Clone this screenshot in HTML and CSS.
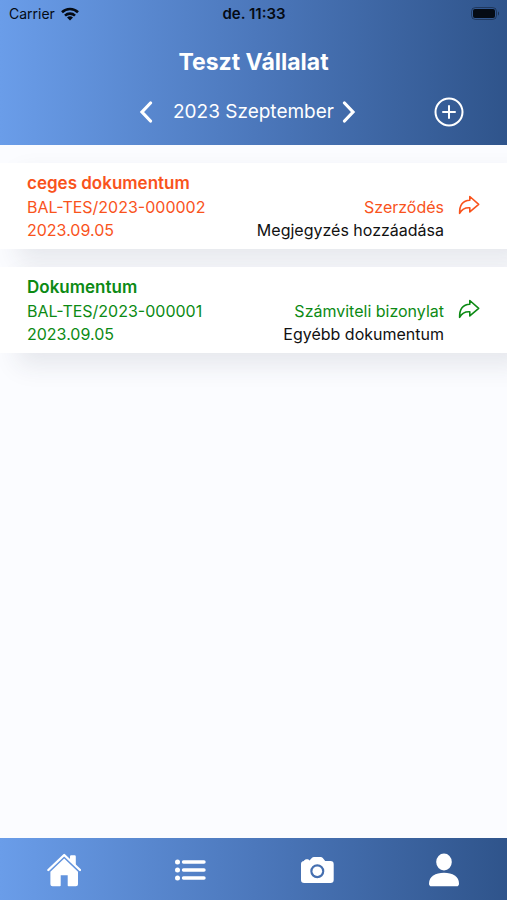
FILE: index.html
```html
<!DOCTYPE html>
<html lang="hu">
<head>
<meta charset="utf-8">
<meta name="viewport" content="width=device-width, initial-scale=1">
<title>Teszt Vállalat</title>
<link rel="stylesheet" href="styles.css">
</head>
<body>
<header class="header">
  <div class="status">
    <div class="carrier">
      <span>Carrier</span>
      <svg class="wifi" viewBox="0 0 18 14" width="18" height="14" aria-hidden="true">
        <g fill="none" stroke="currentColor" stroke-width="2.6"><path d="M1 5.2a11.5 11.5 0 0 1 16 0"/><path d="M4 8.6a7.2 7.2 0 0 1 10 0"/></g>
        <path fill="currentColor" d="M9 13.6 6 10.6a4.3 4.3 0 0 1 6 0z"/>
      </svg>
    </div>
    <time class="clock">de. 11:33</time>
    <svg class="battery" viewBox="0 0 28 14" width="28" height="14" aria-hidden="true">
      <rect x="0.5" y="0.5" width="25" height="12" rx="4" fill="none" stroke="currentColor" stroke-opacity=".4"/>
      <rect x="2" y="2" width="22" height="9" rx="2" fill="currentColor"/>
      <path d="M27 4.5c1.3.6 1.3 3.4 0 4z" fill="currentColor" fill-opacity=".5"/>
    </svg>
  </div>
  <h1 class="company">Teszt Vállalat</h1>
  <div class="month">
    <div class="month-start">
      <button class="icon-button" type="button" aria-label="Előző hónap">
        <svg viewBox="0 0 14 22" width="14" height="22"><path d="M11.500 2 3 11l8.500 9" fill="none" stroke="currentColor" stroke-width="3.200" stroke-linecap="round" stroke-linejoin="miter"/></svg>
      </button>
    </div>
    <span class="month-name">2023 Szeptember</span>
    <div class="month-end">
      <button class="icon-button" type="button" aria-label="Következő hónap">
        <svg viewBox="0 0 14 22" width="14" height="22"><path d="M2.500 2 11 11l-8.500 9" fill="none" stroke="currentColor" stroke-width="3.200" stroke-linecap="round" stroke-linejoin="miter"/></svg>
      </button>
      <button class="icon-button" type="button" aria-label="Új dokumentum">
        <svg viewBox="0 0 30 30" width="30" height="30" fill="none" stroke="currentColor" stroke-width="2" stroke-linecap="round"><circle cx="15" cy="15" r="13.500"/><path d="M15 9v12M9 15h12"/></svg>
      </button>
    </div>
  </div>
</header>

<main class="documents">
  <article class="card card-pending">
    <div class="info">
      <h2 class="name">ceges dokumentum</h2>
      <p>BAL-TES/2023-000002</p>
      <p>2023.09.05</p>
    </div>
    <div class="kind">
      <p>Szerződés</p>
      <p class="note">Megjegyzés hozzáadása</p>
    </div>
    <button class="icon-button share" type="button" aria-label="Megosztás">
      <svg viewBox="0 0 22 20" width="22" height="20"><path d="M11.800 1.500 20.700 9.300l-8.900 7.600v-4.100C7.500 12.500 4 14 1.600 18.300 1.400 10.500 5 5.600 11.800 5.200z" fill="none" stroke="currentColor" stroke-width="1.600" stroke-linejoin="round"/></svg>
    </button>
  </article>
  <article class="card card-done">
    <div class="info">
      <h2 class="name">Dokumentum</h2>
      <p>BAL-TES/2023-000001</p>
      <p>2023.09.05</p>
    </div>
    <div class="kind">
      <p>Számviteli bizonylat</p>
      <p class="note">Egyébb dokumentum</p>
    </div>
    <button class="icon-button share" type="button" aria-label="Megosztás">
      <svg viewBox="0 0 22 20" width="22" height="20"><path d="M11.800 1.500 20.700 9.300l-8.900 7.600v-4.100C7.500 12.500 4 14 1.600 18.300 1.400 10.500 5 5.600 11.800 5.200z" fill="none" stroke="currentColor" stroke-width="1.600" stroke-linejoin="round"/></svg>
    </button>
  </article>
</main>

<nav class="tabs" aria-label="Fő menü">
  <a href="#home" aria-label="Kezdőlap">
    <svg viewBox="0 0 36 36" width="36" height="36" fill="currentColor"><path d="M3.400 18 19.200 3l15.800 15" fill="none" stroke="currentColor" stroke-width="2.400" stroke-linecap="round" stroke-linejoin="round"/><path d="M25 4.500a1.200 1.200 0 0 1 1.200-1.200h3.400a1.200 1.200 0 0 1 1.200 1.200v9L25 8z"/><path d="M19.200 6.600 5.400 19.700v12.500A2.100 2.100 0 0 0 7.500 34.300h7.400a.8.800 0 0 0 .8-.8V23.300h7v10.200a.8.800 0 0 0 .8.800h7.400a2.100 2.100 0 0 0 2.100-2.100V19.700z"/></svg>
  </a>
  <a href="#list" aria-label="Lista">
    <svg viewBox="0 0 36 36" width="36" height="36" fill="currentColor"><circle cx="5.500" cy="10" r="2.500"/><circle cx="5.500" cy="18" r="2.500"/><circle cx="5.500" cy="26" r="2.500"/><path d="M11.500 10h20.500M11.500 18h20.500M11.500 26h20.500" stroke="currentColor" stroke-width="3.400" stroke-linecap="round"/></svg>
  </a>
  <a href="#camera" aria-label="Kamera">
    <svg viewBox="0 0 36 36" width="36" height="36" fill="currentColor"><path fill-rule="evenodd" d="M5 8.500 6.800 7.200h2.400L10.500 8.500 12.800 5.900A3 3 0 0 1 15 4.900h6.500a3 3 0 0 1 2.300 1L26.200 9H31.500a3.200 3.200 0 0 1 3.200 3.200v15.600A3.200 3.200 0 0 1 31.500 31H5.200A3.200 3.200 0 0 1 2 27.800V12.200A3.200 3.200 0 0 1 5 9zM18.300 12.200a7 7 0 1 0 0 14 7 7 0 0 0 0-14z"/><circle cx="18.300" cy="19.200" r="4.800"/></svg>
  </a>
  <a href="#profile" aria-label="Profil">
    <svg viewBox="0 0 36 36" width="36" height="36" fill="currentColor"><ellipse cx="18" cy="10" rx="7.800" ry="8.500"/><path d="M3 31.500C3 24.500 9.500 20.800 18 20.800s15 3.700 15 10.700c0 1.900-.8 2.800-2.500 2.800h-25C3.800 34.300 3 33.400 3 31.500z"/></svg>
  </a>
</nav>
</body>
</html>
```
FILE: styles.css
```css
:root {
  --brand: linear-gradient(90deg, #6a9de9 0%, #4c78bc 50%, #2f548b 100%);
}

* {
  box-sizing: border-box;
}

body {
  display: flex;
  flex-direction: column;
  min-height: 100vh;
  margin: 0;
  background: #fbfcff;
  color: #111;
  font: 400 16px/23px Inter, "Liberation Sans", sans-serif;
}

h1,
h2,
p {
  margin: 0;
}

.header {
  padding-bottom: 17px;
  background: var(--brand);
  color: #fff;
}

.status {
  display: grid;
  grid-template-columns: 1fr auto 1fr;
  align-items: center;
  padding: 2px 8px 0 9px;
  color: #050b14;
  font-size: 15px;
}

.carrier {
  display: flex;
  align-items: center;
  gap: 6px;
  font-size: 14px;
}

.clock {
  font-weight: 600;
}

.battery {
  justify-self: end;
}

.company {
  margin-top: 21px;
  font-size: 23px;
  font-weight: 700;
  line-height: 32px;
  text-align: center;
}

.month {
  display: grid;
  grid-template-columns: 1fr auto 1fr;
  align-items: center;
  margin-top: 18px;
}

.month-name {
  font-size: 19px;
  line-height: 32px;
}

.month-start {
  display: flex;
  justify-content: flex-end;
  padding-right: 20px;
}

.month-end {
  display: flex;
  align-items: center;
  justify-content: space-between;
  padding: 0 43px 0 8px;
}

.icon-button {
  display: flex;
  padding: 0;
  border: 0;
  background: none;
  color: inherit;
  cursor: pointer;
}

.documents {
  display: flex;
  flex: 1;
  flex-direction: column;
  gap: 18px;
  padding: 18px 0;
}

.card {
  display: flex;
  align-items: flex-end;
  padding: 8px 27px 7px;
  background: #fff;
  box-shadow: 18px 12px 24px rgba(40, 50, 70, 0.1);
}

.card-pending {
  color: #f9531c;
}

.card-done {
  color: #0c8a14;
}

.info {
  flex: 1;
}

.name {
  margin-bottom: 1px;
  font-size: 17px;
  font-weight: 600;
  line-height: 24px;
}

.kind {
  text-align: right;
}

.note {
  color: #111;
}

.share {
  align-self: center;
  margin-left: 14px;
  padding-bottom: 4px;
}

.tabs {
  display: grid;
  grid-template-columns: repeat(4, 1fr);
  background: var(--brand);
}

.tabs a {
  display: flex;
  align-items: center;
  justify-content: center;
  height: 62px;
  padding-top: 2px;
  color: #fff;
}
```
